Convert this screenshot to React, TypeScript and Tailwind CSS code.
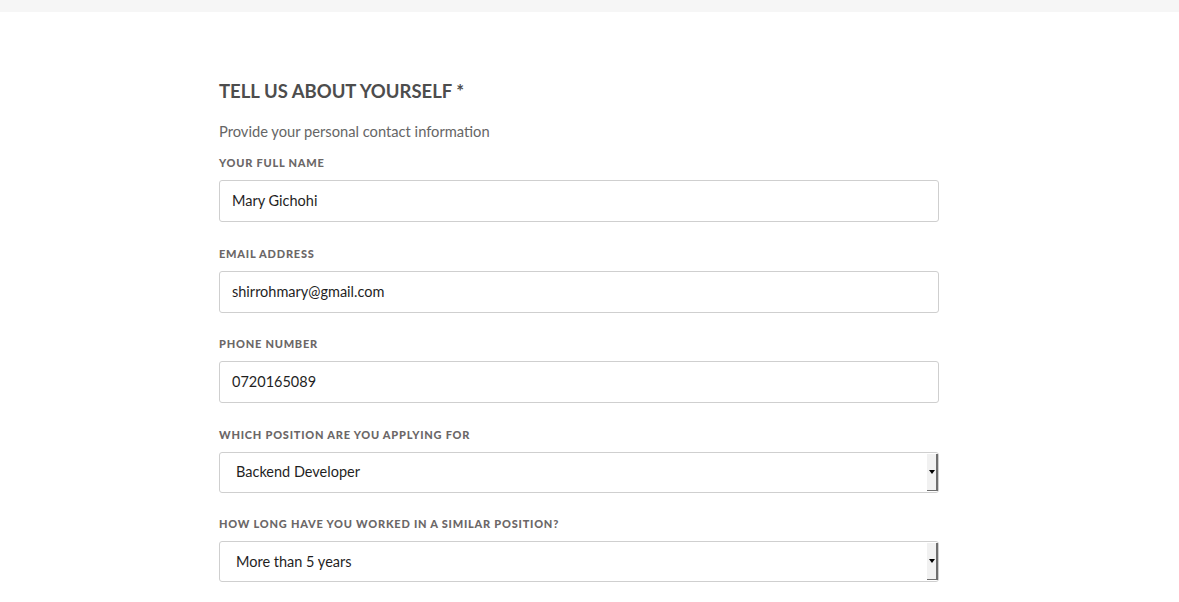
import React from 'react';

const font = { fontFamily: 'Lato, "Noto Sans", sans-serif' };

function Label({ children }: { children: React.ReactNode }) {
  return (
    <div className="h-4 leading-4 text-[11px] font-black tracking-[0.07em] text-[#6b6767] uppercase">
      {children}
    </div>
  );
}

function TextField({ label, value }: { label: string; value: string }) {
  return (
    <div className="mb-[23.5px]">
      <Label>{label}</Label>
      <div className="mt-[9px] h-[42px] w-[720px] rounded-[3px] border border-[#cfcfcf] bg-white px-3 flex items-center text-[14.5px] text-[#1f1f1f]">
        {value}
      </div>
    </div>
  );
}

function SelectField({ label, value }: { label: string; value: string }) {
  return (
    <div className="mb-[23.5px]">
      <Label>{label}</Label>
      <div className="mt-[9px] h-[41px] w-[720px] rounded-[3px] border border-[#cfcfcf] bg-white flex text-[14.5px] text-[#1f1f1f]">
        <div className="flex-1 flex items-center pl-4">{value}</div>
        <div className="w-[11px] my-[1px] bg-[#f1f1f1] border-r-2 border-b border-[#6e6e6e] flex items-center justify-center">
          <div className="w-0 h-0 border-l-[3px] border-r-[3px] border-t-[4px] border-l-transparent border-r-transparent border-t-black" />
        </div>
      </div>
    </div>
  );
}

export default function App() {
  return (
    <div className="min-h-screen bg-white" style={font}>
      <div className="h-3 bg-[#f6f6f6]" />
      <div className="pl-[219px] pt-[63px]">
        <h1 className="text-[18.5px] font-bold leading-[32px] text-[#4d4d4d] uppercase">
          Tell us about yourself *
        </h1>
        <p className="mt-[14px] text-[14.7px] leading-[20px] text-[#666]">
          Provide your personal contact information
        </p>
        <div className="mt-[14px]">
          <TextField label="Your full name" value="Mary Gichohi" />
          <TextField label="Email address" value="shirrohmary@gmail.com" />
          <TextField label="Phone number" value="0720165089" />
          <SelectField label="Which position are you applying for" value="Backend Developer" />
          <SelectField label="How long have you worked in a similar position?" value="More than 5 years" />
        </div>
      </div>
    </div>
  );
}
